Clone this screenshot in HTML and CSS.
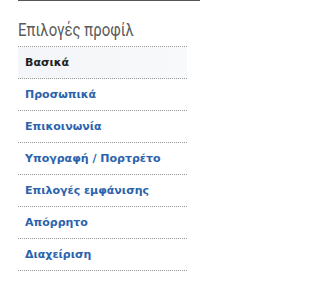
FILE: index.html
```html
<!DOCTYPE html>
<html lang="el">
<head>
<meta charset="utf-8">
<link rel="stylesheet" href="styles.css">
</head>
<body>
<div class="topbar"></div>
<div class="panel">
  <h2 class="title"><span class="title-text">Επιλογές προφίλ</span></h2>
  <ul class="menu">
    <li class="item active"><span>Βασικά</span></li>
    <li class="item"><a href="#">Προσωπικά</a></li>
    <li class="item"><a href="#">Επικοινωνία</a></li>
    <li class="item"><a href="#">Υπογραφή / Πορτρέτο</a></li>
    <li class="item"><a href="#">Επιλογές εμφάνισης</a></li>
    <li class="item"><a href="#">Απόρρητο</a></li>
    <li class="item"><a href="#">Διαχείριση</a></li>
  </ul>
</div>
</body>
</html>
```
FILE: styles.css
```css
html, body {
  margin: 0;
  padding: 0;
  background: #fff;
}
.topbar {
  margin-left: 18px;
  width: 182px;
  height: 1px;
  background: #555;
}
.panel {
  width: 169px;
  margin-left: 18px;
  font-family: "DejaVu Sans", Verdana, sans-serif;
}
.title {
  margin: 0;
  padding-top: 18px;
  height: 27px;
  font-family: Roboto, sans-serif;
  font-weight: 400;
  font-size: 18px;
  line-height: 22px;
  color: #5a5a5a;
  border-bottom: 1px dotted #999;
  white-space: nowrap;
}
.title-text {
  display: inline-block;
  transform: scaleX(0.83);
  transform-origin: left center;
}
.menu {
  list-style: none;
  margin: 0;
  padding: 0;
}
.item {
  height: 31px;
  border-bottom: 1px dotted #999;
  display: flex;
  align-items: center;
  padding-left: 7px;
  font-size: 11px;
  font-weight: bold;
}
.item.active {
  background: linear-gradient(to right, #f3f5f8, #f8f9fb);
  color: #222;
}
.item a {
  color: #2b63ad;
  text-decoration: none;
}
```
